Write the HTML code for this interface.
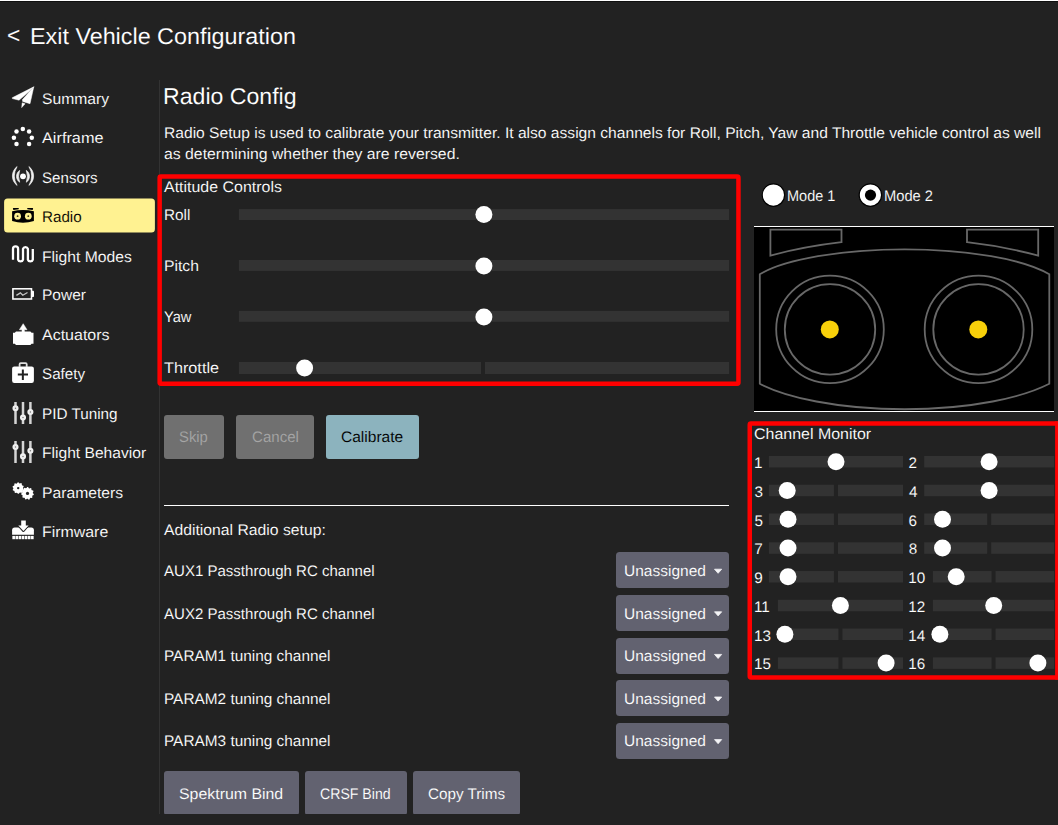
<!DOCTYPE html>
<html lang="en"><head><meta charset="utf-8"><title>Radio Config</title>
<style>
html,body{margin:0;padding:0;}
body{width:1058px;height:825px;overflow:hidden;background:#222222;position:relative;
 font-family:"Liberation Sans",sans-serif;}
#root{position:absolute;left:0;top:0;width:1058px;height:825px;overflow:hidden;background:#222222;}
.t{position:absolute;white-space:nowrap;text-rendering:geometricPrecision;line-height:20px;height:20px;transform-origin:0 0;display:block;}
.b{position:absolute;}
.bar{position:absolute;background:#333333;}
.dot{position:absolute;background:#fff;border-radius:50%;}
.btn{position:absolute;background:#626270;border-radius:3px;}
svg{position:absolute;left:0;top:0;overflow:visible;}
</style></head>
<body><div id="root">
<div class="b" style="left:0.00px;top:0.00px;width:1058.00px;height:1.00px;background:#ffffff;"></div>
<div class="b" style="left:0.00px;top:1.00px;width:1058.00px;height:1.00px;background:#101010;"></div>
<div class="b" style="left:159.00px;top:80.00px;width:1.00px;height:734.00px;background:#333333;"></div>
<div class="b" style="left:164.00px;top:415.00px;width:60.00px;height:44.00px;background:#707070;border-radius:3px;"></div>
<div class="b" style="left:236.00px;top:415.00px;width:78.00px;height:44.00px;background:#707070;border-radius:3px;"></div>
<div class="b" style="left:326.00px;top:415.00px;width:93.00px;height:44.00px;background:#8cb3be;border-radius:3px;"></div>
<div class="b" style="left:164.00px;top:505.00px;width:565.00px;height:1.00px;background:#ffffff;"></div>
<div class="b" style="left:616.00px;top:552.00px;width:113.00px;height:36.00px;background:#626270;border-radius:3.5px;"></div>
<div class="b" style="left:616.00px;top:595.00px;width:113.00px;height:36.00px;background:#626270;border-radius:3.5px;"></div>
<div class="b" style="left:616.00px;top:638.00px;width:113.00px;height:36.00px;background:#626270;border-radius:3.5px;"></div>
<div class="b" style="left:616.00px;top:680.00px;width:113.00px;height:36.00px;background:#626270;border-radius:3.5px;"></div>
<div class="b" style="left:616.00px;top:723.00px;width:113.00px;height:36.00px;background:#626270;border-radius:3.5px;"></div>
<div class="b" style="left:0;top:0;width:1058px;height:814px;overflow:hidden">
<div class="b" style="left:164.00px;top:771.00px;width:135.00px;height:44.00px;background:#626270;border-radius:3px;"></div>
<div class="b" style="left:305.00px;top:771.00px;width:101.50px;height:44.00px;background:#626270;border-radius:3px;"></div>
<div class="b" style="left:412.50px;top:771.00px;width:107.50px;height:44.00px;background:#626270;border-radius:3px;"></div>
</div>
<svg width="1058" height="825" viewBox="0 0 1058 825">
<rect x="4.1" y="198.4" width="150.8" height="34.0" rx="3.5" fill="#fff291"/>
<rect x="238.90" y="209.10" width="490.20" height="10.90" fill="#333333"/>
<rect x="238.90" y="260.00" width="490.20" height="10.90" fill="#333333"/>
<rect x="238.90" y="310.90" width="490.20" height="10.90" fill="#333333"/>
<rect x="238.90" y="362.00" width="242.10" height="12.00" fill="#333333"/>
<rect x="485.00" y="362.00" width="244.10" height="12.00" fill="#333333"/>
<rect x="768.90" y="455.95" width="134.10" height="11.50" fill="#333333"/>
<rect x="924.20" y="455.95" width="130.00" height="11.50" fill="#333333"/>
<rect x="768.90" y="484.72" width="65.05" height="11.50" fill="#333333"/>
<rect x="837.95" y="484.72" width="65.05" height="11.50" fill="#333333"/>
<rect x="924.20" y="484.72" width="130.00" height="11.50" fill="#333333"/>
<rect x="768.90" y="513.49" width="65.05" height="11.50" fill="#333333"/>
<rect x="837.95" y="513.49" width="65.05" height="11.50" fill="#333333"/>
<rect x="924.20" y="513.49" width="63.00" height="11.50" fill="#333333"/>
<rect x="991.20" y="513.49" width="63.00" height="11.50" fill="#333333"/>
<rect x="768.90" y="542.26" width="65.05" height="11.50" fill="#333333"/>
<rect x="837.95" y="542.26" width="65.05" height="11.50" fill="#333333"/>
<rect x="924.20" y="542.26" width="63.00" height="11.50" fill="#333333"/>
<rect x="991.20" y="542.26" width="63.00" height="11.50" fill="#333333"/>
<rect x="768.90" y="571.03" width="65.05" height="11.50" fill="#333333"/>
<rect x="837.95" y="571.03" width="65.05" height="11.50" fill="#333333"/>
<rect x="932.90" y="571.03" width="58.65" height="11.50" fill="#333333"/>
<rect x="995.55" y="571.03" width="58.65" height="11.50" fill="#333333"/>
<rect x="777.90" y="599.80" width="125.10" height="11.50" fill="#333333"/>
<rect x="932.90" y="599.80" width="121.30" height="11.50" fill="#333333"/>
<rect x="777.90" y="628.57" width="60.55" height="11.50" fill="#333333"/>
<rect x="842.45" y="628.57" width="60.55" height="11.50" fill="#333333"/>
<rect x="932.90" y="628.57" width="58.65" height="11.50" fill="#333333"/>
<rect x="995.55" y="628.57" width="58.65" height="11.50" fill="#333333"/>
<rect x="777.90" y="657.34" width="60.55" height="11.50" fill="#333333"/>
<rect x="842.45" y="657.34" width="60.55" height="11.50" fill="#333333"/>
<rect x="932.90" y="657.34" width="58.65" height="11.50" fill="#333333"/>
<rect x="995.55" y="657.34" width="58.65" height="11.50" fill="#333333"/>
<circle cx="483.90" cy="214.50" r="8.50" fill="#fff"/>
<circle cx="483.90" cy="265.90" r="8.50" fill="#fff"/>
<circle cx="483.90" cy="317.00" r="8.50" fill="#fff"/>
<circle cx="304.60" cy="367.90" r="8.50" fill="#fff"/>
<circle cx="836.00" cy="461.70" r="8.50" fill="#fff"/>
<circle cx="989.10" cy="461.70" r="8.50" fill="#fff"/>
<circle cx="787.20" cy="490.47" r="8.50" fill="#fff"/>
<circle cx="989.10" cy="490.47" r="8.50" fill="#fff"/>
<circle cx="788.00" cy="519.24" r="8.50" fill="#fff"/>
<circle cx="942.50" cy="519.24" r="8.50" fill="#fff"/>
<circle cx="788.00" cy="548.01" r="8.50" fill="#fff"/>
<circle cx="942.50" cy="548.01" r="8.50" fill="#fff"/>
<circle cx="788.00" cy="576.78" r="8.50" fill="#fff"/>
<circle cx="956.20" cy="576.78" r="8.50" fill="#fff"/>
<circle cx="840.40" cy="605.55" r="8.50" fill="#fff"/>
<circle cx="993.70" cy="605.55" r="8.50" fill="#fff"/>
<circle cx="784.90" cy="634.32" r="8.50" fill="#fff"/>
<circle cx="939.90" cy="634.32" r="8.50" fill="#fff"/>
<circle cx="886.10" cy="663.09" r="8.50" fill="#fff"/>
<circle cx="1037.90" cy="663.09" r="8.50" fill="#fff"/>
<rect x="159.65" y="176.55" width="578.80" height="207.10" rx="1.2" fill="none" stroke="#ff0000" stroke-width="4.5"/>
<rect x="749.75" y="423.55" width="323.00" height="253.90" rx="1.2" fill="none" stroke="#ff0000" stroke-width="4.5"/>
<rect x="1055.1" y="421.3" width="4" height="258.4" fill="#ff0000"/>
<path d="M714.5 569.20 L721.7 569.20 L718.1 573.30 Z" fill="#f4f4f6" stroke="#f4f4f6" stroke-width="0.8" stroke-linejoin="round"/>
<path d="M714.5 611.80 L721.7 611.80 L718.1 615.90 Z" fill="#f4f4f6" stroke="#f4f4f6" stroke-width="0.8" stroke-linejoin="round"/>
<path d="M714.5 654.40 L721.7 654.40 L718.1 658.50 Z" fill="#f4f4f6" stroke="#f4f4f6" stroke-width="0.8" stroke-linejoin="round"/>
<path d="M714.5 697.00 L721.7 697.00 L718.1 701.10 Z" fill="#f4f4f6" stroke="#f4f4f6" stroke-width="0.8" stroke-linejoin="round"/>
<path d="M714.5 739.60 L721.7 739.60 L718.1 743.70 Z" fill="#f4f4f6" stroke="#f4f4f6" stroke-width="0.8" stroke-linejoin="round"/>
<circle cx="773.4" cy="195.1" r="11.2" fill="#fff" stroke="#000" stroke-width="1.2"/>
<circle cx="870.4" cy="195.1" r="11.2" fill="#fff" stroke="#000" stroke-width="1.2"/>
<circle cx="870.5" cy="195.1" r="5.6" fill="#000"/>
<rect x="754" y="226" width="300" height="186" fill="#000"/>
<rect x="754" y="226" width="300" height="1" fill="#fff"/>
<rect x="754" y="411" width="300" height="1" fill="#fff"/>
<path d="M770.4 229.7 L841.5 229.7 L841.5 242.2 Q804 246.5 770.4 255.6 Z" stroke="#686868" stroke-width="1.8" fill="none"/>
<path d="M1038.2 229.7 L967.0 229.7 L967.0 242.2 Q1004.5 246.5 1038.2 255.6 Z" stroke="#686868" stroke-width="1.8" fill="none"/>
<path d="M759.8 274.3 A158 41.5 0 0 1 1049.3 274.3 L1049.3 383.8 A170 53.5 0 0 1 759.8 383.8 Z" stroke="#686868" stroke-width="1.8" fill="none"/>
<circle cx="830.0" cy="329.4" r="53.8" stroke="#686868" stroke-width="1.8" fill="none"/>
<circle cx="830.0" cy="329.4" r="45.2" stroke="#686868" stroke-width="1.8" fill="none"/>
<circle cx="829.8" cy="329.4" r="9.0" fill="#f8d00a"/>
<circle cx="978.5" cy="329.4" r="53.8" stroke="#686868" stroke-width="1.8" fill="none"/>
<circle cx="978.5" cy="329.4" r="45.2" stroke="#686868" stroke-width="1.8" fill="none"/>
<circle cx="978.3" cy="329.4" r="9.0" fill="#f8d00a"/>
<path d="M33.8 86.8 L12.2 97.8 L12.4 98.6 L19.0 100.2 L29.3 91.3 Z" fill="#fff" stroke="#fff" stroke-width="0.5" stroke-linejoin="round"/>
<path d="M33.8 86.8 L22.5 99.6 L22.6 101.4 L30.0 103.7 Z" fill="#fff" stroke="#fff" stroke-width="0.5" stroke-linejoin="round"/>
<path d="M22.2 102.8 L25.1 103.8 L21.7 107.6 Z" fill="#fff" stroke="#fff" stroke-width="0.5" stroke-linejoin="round"/>
<circle cx="22.8" cy="129.0" r="2.25" fill="#fff"/>
<circle cx="16.5" cy="131.6" r="2.25" fill="#fff"/>
<circle cx="29.1" cy="131.6" r="2.25" fill="#fff"/>
<circle cx="13.9" cy="137.7" r="2.25" fill="#fff"/>
<circle cx="31.8" cy="137.7" r="2.25" fill="#fff"/>
<circle cx="16.5" cy="144.0" r="2.25" fill="#fff"/>
<circle cx="29.1" cy="144.0" r="2.25" fill="#fff"/>
<circle cx="23.0" cy="176.3" r="2.9" fill="#fff"/>
<path d="M19.7 170.4 A7.04 7.04 0 0 0 19.7 182.2 A16.37 16.37 0 0 1 19.7 170.4 Z" fill="#f0f0f0" stroke="#f0f0f0" stroke-width="0.7" stroke-linejoin="round"/>
<path d="M26.3 170.4 A7.04 7.04 0 0 1 26.3 182.2 A16.37 16.37 0 0 0 26.3 170.4 Z" fill="#f0f0f0" stroke="#f0f0f0" stroke-width="0.7" stroke-linejoin="round"/>
<path d="M17.1 166.6 A11.75 11.75 0 0 0 17.1 185.4 A18.29 18.29 0 0 1 17.1 166.6 Z" fill="#f0f0f0" stroke="#f0f0f0" stroke-width="0.7" stroke-linejoin="round"/>
<path d="M28.9 166.6 A11.75 11.75 0 0 1 28.9 185.4 A18.29 18.29 0 0 0 28.9 166.6 Z" fill="#f0f0f0" stroke="#f0f0f0" stroke-width="0.7" stroke-linejoin="round"/>
<path d="M12.1 211.2 Q23 208.9 33.9 211.2 L33.9 221.0 Q23 224.4 12.1 221.0 Z" fill="#000"/>
<path d="M12.9 208.0 L18.8 208.0 L18.6 209.3 L13.3 209.9 Z" fill="#000"/>
<path d="M33.1 208.0 L27.2 208.0 L27.4 209.3 L32.7 209.9 Z" fill="#000"/>
<circle cx="17.6" cy="216.2" r="3.35" fill="#fff291"/>
<circle cx="17.6" cy="216.2" r="0.9" fill="#3a3620"/>
<circle cx="28.3" cy="216.2" r="3.35" fill="#fff291"/>
<circle cx="28.3" cy="216.2" r="0.9" fill="#3a3620"/>
<path d="M13.0 259.8 L13.0 248.9 A2.5500000000000007 2.5500000000000007 0 0 1 18.1 248.9 L18.1 259.6 A2.5500000000000007 2.5500000000000007 0 0 0 23.0 259.6 L23.0 248.9 A2.5500000000000007 2.5500000000000007 0 0 1 27.9 248.9 L27.9 259.6 A2.5500000000000007 2.5500000000000007 0 0 0 32.8 259.6 L32.8 249.1" fill="none" stroke="#fff" stroke-width="2.3"/>
<rect x="12.9" y="288.8" width="18.6" height="10.2" fill="none" stroke="#fff" stroke-width="1.55"/>
<path d="M31.4 290.8 L33.2 290.8 Q34.0 290.8 34.0 291.6 L34.0 296.2 Q34.0 297.0 33.2 297.0 L31.4 297.0 Z" fill="#fff"/>
<path d="M16.4 295.4 L20.4 292.9 L22.8 295.2 L27.5 292.5" fill="none" stroke="#c4c4c4" stroke-width="1.3" stroke-linejoin="miter"/>
<path d="M16.0 331.6 L30.4 331.6 L31.6 332.8 L33.5 332.8 L33.5 343.7 L31.6 343.7 L30.4 345.0 L16.0 345.0 L14.8 343.7 L13.0 343.7 L13.0 332.8 L14.8 332.8 Z" fill="#fff"/>
<path d="M23.2 323.7 L27.0 329.7 L24.4 329.7 L24.4 332 L22.0 332 L22.0 329.7 L19.4 329.7 Z" fill="#fff" stroke="#fff" stroke-width="0.5" stroke-linejoin="round"/>
<rect x="12.1" y="366.6" width="21.8" height="16.3" rx="2.2" fill="#fff"/>
<path d="M19.6 367 L19.6 364.2 Q19.6 363.1 20.7 363.1 L25.6 363.1 Q26.7 363.1 26.7 364.2 L26.7 367" fill="none" stroke="#e0e0e0" stroke-width="1.8"/>
<path d="M17.8 374.6 L28.0 374.6 M22.85 369.4 L22.85 380.1" stroke="#222" stroke-width="2.0" stroke-linecap="butt" fill="none"/>
<rect x="14.25" y="402.0" width="2.5" height="22.0" fill="#d4d4d4"/>
<rect x="21.75" y="402.0" width="2.5" height="22.0" fill="#d4d4d4"/>
<rect x="29.15" y="402.0" width="2.5" height="22.0" fill="#d4d4d4"/>
<circle cx="15.5" cy="408.3" r="1.9" fill="#777" stroke="#f0f0f0" stroke-width="2.3"/>
<circle cx="23.0" cy="417.6" r="1.9" fill="#777" stroke="#f0f0f0" stroke-width="2.3"/>
<circle cx="30.4" cy="412.0" r="1.9" fill="#777" stroke="#f0f0f0" stroke-width="2.3"/>
<rect x="14.25" y="441.0" width="2.5" height="22.0" fill="#d4d4d4"/>
<rect x="21.75" y="441.0" width="2.5" height="22.0" fill="#d4d4d4"/>
<rect x="29.15" y="441.0" width="2.5" height="22.0" fill="#d4d4d4"/>
<circle cx="15.5" cy="447.0" r="1.9" fill="#777" stroke="#f0f0f0" stroke-width="2.3"/>
<circle cx="23.0" cy="456.4" r="1.9" fill="#777" stroke="#f0f0f0" stroke-width="2.3"/>
<circle cx="30.4" cy="450.7" r="1.9" fill="#777" stroke="#f0f0f0" stroke-width="2.3"/>
<path d="M23.84 489.24 L23.59 490.11 L22.47 490.51 L22.04 491.15 L22.09 492.34 L21.38 492.89 L20.24 492.56 L19.51 492.82 L18.85 493.81 L17.95 493.84 L17.23 492.90 L16.49 492.69 L15.37 493.11 L14.62 492.60 L14.59 491.41 L14.12 490.81 L12.97 490.49 L12.66 489.64 L13.33 488.66 L13.30 487.89 L12.56 486.96 L12.81 486.09 L13.93 485.69 L14.36 485.05 L14.31 483.86 L15.02 483.31 L16.16 483.64 L16.89 483.38 L17.55 482.39 L18.45 482.36 L19.17 483.30 L19.91 483.51 L21.03 483.09 L21.78 483.60 L21.81 484.79 L22.28 485.39 L23.43 485.71 L23.74 486.56 L23.07 487.54 L23.10 488.31 Z" fill="#fff"/>
<circle cx="18.2" cy="488.1" r="1.2" fill="#222222"/>
<path d="M33.82 494.03 L33.66 494.93 L32.50 495.43 L32.16 496.12 L32.47 497.35 L31.86 498.02 L30.61 497.81 L29.95 498.21 L29.55 499.41 L28.67 499.64 L27.73 498.80 L26.96 498.77 L25.97 499.56 L25.11 499.28 L24.78 498.06 L24.14 497.63 L22.88 497.76 L22.31 497.06 L22.69 495.85 L22.39 495.14 L21.26 494.57 L21.16 493.67 L22.13 492.86 L22.26 492.10 L21.62 491.01 L22.02 490.20 L23.27 490.04 L23.79 489.47 L23.84 488.21 L24.62 487.74 L25.76 488.29 L26.50 488.09 L27.23 487.06 L28.13 487.08 L28.80 488.16 L29.53 488.40 L30.70 487.92 L31.45 488.43 L31.43 489.69 L31.91 490.29 L33.16 490.52 L33.51 491.35 L32.81 492.40 L32.90 493.17 Z" fill="#fff"/>
<circle cx="27.5" cy="493.4" r="1.6" fill="#222222"/>
<path d="M12.1 534.7 L12.1 530.2 Q12.1 527.6 14.7 527.6 L31.3 527.6 Q33.9 527.6 33.9 530.2 L33.9 534.7 Z" fill="#fff"/>
<path d="M17.0 525.0 L29.8 525.0 L23.4 532.0 Z" fill="#222222" stroke="#222222" stroke-width="1.0"/>
<path d="M21.2 520.4 L25.8 520.4 L25.8 525.6 L28.6 525.6 L23.45 531.0 L18.3 525.6 L21.2 525.6 Z" fill="#fff"/>
<rect x="12.35" y="535.9" width="2.61" height="3.3" fill="#fff"/>
<rect x="15.46" y="535.9" width="2.61" height="3.3" fill="#fff"/>
<rect x="18.58" y="535.9" width="2.61" height="3.3" fill="#fff"/>
<rect x="21.69" y="535.9" width="2.61" height="3.3" fill="#fff"/>
<rect x="24.81" y="535.9" width="2.61" height="3.3" fill="#fff"/>
<rect x="27.92" y="535.9" width="2.61" height="3.3" fill="#fff"/>
<rect x="31.04" y="535.9" width="2.61" height="3.3" fill="#fff"/>
</svg>
<span class="t" style="left:7.43px;top:25px;font-size:22.82px;color:#fff;-webkit-text-stroke:0.1px #222222;transform:scaleX(0.9991)">&lt;</span>
<span class="t" style="left:29.58px;top:26px;font-size:22.82px;color:#fff;-webkit-text-stroke:0.1px #222222;transform:scaleX(1.0230)">Exit Vehicle Configuration</span>
<span class="t" style="left:41.91px;top:90px;font-size:15.26px;color:#fff;-webkit-text-stroke:0.1px #222222;transform:scaleX(1.0275)">Summary</span>
<span class="t" style="left:41.90px;top:129px;font-size:15.26px;color:#fff;-webkit-text-stroke:0.1px #222222;transform:scaleX(1.0676)">Airframe</span>
<span class="t" style="left:41.93px;top:169px;font-size:15.26px;color:#fff;-webkit-text-stroke:0.1px #222222;transform:scaleX(0.9921)">Sensors</span>
<span class="t" style="left:41.91px;top:208px;font-size:15.26px;color:#000;-webkit-text-stroke:0.1px #fff291;transform:scaleX(0.9957)">Radio</span>
<span class="t" style="left:41.87px;top:248px;font-size:15.26px;color:#fff;-webkit-text-stroke:0.1px #222222;transform:scaleX(1.0292)">Flight Modes</span>
<span class="t" style="left:41.89px;top:286px;font-size:15.26px;color:#fff;-webkit-text-stroke:0.1px #222222;transform:scaleX(1.0169)">Power</span>
<span class="t" style="left:41.90px;top:326px;font-size:15.26px;color:#fff;-webkit-text-stroke:0.1px #222222;transform:scaleX(1.0486)">Actuators</span>
<span class="t" style="left:41.93px;top:365px;font-size:15.26px;color:#fff;-webkit-text-stroke:0.1px #222222;transform:scaleX(0.9956)">Safety</span>
<span class="t" style="left:41.90px;top:405px;font-size:15.26px;color:#fff;-webkit-text-stroke:0.1px #222222;transform:scaleX(1.0023)">PID Tuning</span>
<span class="t" style="left:41.88px;top:444px;font-size:15.26px;color:#fff;-webkit-text-stroke:0.1px #222222;transform:scaleX(1.0236)">Flight Behavior</span>
<span class="t" style="left:41.87px;top:484px;font-size:15.26px;color:#fff;-webkit-text-stroke:0.1px #222222;transform:scaleX(1.0284)">Parameters</span>
<span class="t" style="left:41.86px;top:523px;font-size:15.26px;color:#fff;-webkit-text-stroke:0.1px #222222;transform:scaleX(1.0425)">Firmware</span>
<span class="t" style="left:163.49px;top:86px;font-size:22.82px;color:#fff;-webkit-text-stroke:0.1px #222222;transform:scaleX(1.0127)">Radio Config</span>
<span class="t" style="left:163.68px;top:124px;font-size:15.26px;color:#fff;-webkit-text-stroke:0.1px #222222;transform:scaleX(1.0233)">Radio Setup is used to calibrate your transmitter. It also assign channels for Roll, Pitch, Yaw and Throttle vehicle control as well</span>
<span class="t" style="left:164.21px;top:145px;font-size:15.26px;color:#fff;-webkit-text-stroke:0.1px #222222;transform:scaleX(1.0355)">as determining whether they are reversed.</span>
<span class="t" style="left:164.30px;top:178px;font-size:15.26px;color:#fff;-webkit-text-stroke:0.1px #222222;transform:scaleX(1.0459)">Attitude Controls</span>
<span class="t" style="left:163.70px;top:206px;font-size:15.26px;color:#fff;-webkit-text-stroke:0.1px #222222;transform:scaleX(1.0045)">Roll</span>
<span class="t" style="left:163.67px;top:257px;font-size:15.26px;color:#fff;-webkit-text-stroke:0.1px #222222;transform:scaleX(1.0320)">Pitch</span>
<span class="t" style="left:163.97px;top:308px;font-size:15.26px;color:#fff;-webkit-text-stroke:0.1px #222222;transform:scaleX(0.9595)">Yaw</span>
<span class="t" style="left:164.15px;top:359px;font-size:15.26px;color:#fff;-webkit-text-stroke:0.1px #222222;transform:scaleX(1.0642)">Throttle</span>
<span class="t" style="left:179.04px;top:428px;font-size:15.26px;color:#a6a6a6;-webkit-text-stroke:0.1px #707070;transform:scaleX(0.9723)">Skip</span>
<span class="t" style="left:251.69px;top:428px;font-size:15.26px;color:#a6a6a6;-webkit-text-stroke:0.1px #707070;transform:scaleX(0.9894)">Cancel</span>
<span class="t" style="left:341.37px;top:428px;font-size:15.26px;color:#000;-webkit-text-stroke:0.1px #8cb3be;transform:scaleX(1.0194)">Calibrate</span>
<span class="t" style="left:164.30px;top:521px;font-size:15.26px;color:#fff;-webkit-text-stroke:0.1px #222222;transform:scaleX(1.0316)">Additional Radio setup:</span>
<span class="t" style="left:164.30px;top:562px;font-size:15.26px;color:#fff;-webkit-text-stroke:0.1px #222222;transform:scaleX(0.9858)">AUX1 Passthrough RC channel</span>
<span class="t" style="left:164.30px;top:605px;font-size:15.26px;color:#fff;-webkit-text-stroke:0.1px #222222;transform:scaleX(0.9858)">AUX2 Passthrough RC channel</span>
<span class="t" style="left:163.70px;top:647px;font-size:15.26px;color:#fff;-webkit-text-stroke:0.1px #222222;transform:scaleX(1.0089)">PARAM1 tuning channel</span>
<span class="t" style="left:163.70px;top:690px;font-size:15.26px;color:#fff;-webkit-text-stroke:0.1px #222222;transform:scaleX(1.0089)">PARAM2 tuning channel</span>
<span class="t" style="left:163.70px;top:732px;font-size:15.26px;color:#fff;-webkit-text-stroke:0.1px #222222;transform:scaleX(1.0089)">PARAM3 tuning channel</span>
<span class="t" style="left:623.73px;top:562px;font-size:15.26px;color:#fff;-webkit-text-stroke:0.1px #626270;transform:scaleX(1.0166)">Unassigned</span>
<span class="t" style="left:623.73px;top:605px;font-size:15.26px;color:#fff;-webkit-text-stroke:0.1px #626270;transform:scaleX(1.0166)">Unassigned</span>
<span class="t" style="left:623.73px;top:647px;font-size:15.26px;color:#fff;-webkit-text-stroke:0.1px #626270;transform:scaleX(1.0166)">Unassigned</span>
<span class="t" style="left:623.73px;top:690px;font-size:15.26px;color:#fff;-webkit-text-stroke:0.1px #626270;transform:scaleX(1.0166)">Unassigned</span>
<span class="t" style="left:623.73px;top:732px;font-size:15.26px;color:#fff;-webkit-text-stroke:0.1px #626270;transform:scaleX(1.0166)">Unassigned</span>
<span class="t" style="left:179.00px;top:785px;font-size:15.26px;color:#fff;-webkit-text-stroke:0.1px #626270;transform:scaleX(1.0419)">Spektrum Bind</span>
<span class="t" style="left:320.14px;top:785px;font-size:15.26px;color:#fff;-webkit-text-stroke:0.1px #626270;transform:scaleX(0.9257)">CRSF Bind</span>
<span class="t" style="left:427.69px;top:785px;font-size:15.26px;color:#fff;-webkit-text-stroke:0.1px #626270;transform:scaleX(0.9994)">Copy Trims</span>
<span class="t" style="left:786.97px;top:187px;font-size:15.26px;color:#fff;-webkit-text-stroke:0.1px #222222;transform:scaleX(0.9512)">Mode 1</span>
<span class="t" style="left:883.75px;top:187px;font-size:15.26px;color:#fff;-webkit-text-stroke:0.1px #222222;transform:scaleX(0.9635)">Mode 2</span>
<span class="t" style="left:754.25px;top:425px;font-size:15.26px;color:#fff;-webkit-text-stroke:0.1px #222222;transform:scaleX(1.0468)">Channel Monitor</span>
<span class="t" style="left:753.95px;top:454px;font-size:15.26px;color:#fff;-webkit-text-stroke:0.1px #222222;transform:scaleX(1.0000)">1</span>
<span class="t" style="left:908.48px;top:454px;font-size:15.26px;color:#fff;-webkit-text-stroke:0.1px #222222;transform:scaleX(1.0000)">2</span>
<span class="t" style="left:754.42px;top:483px;font-size:15.26px;color:#fff;-webkit-text-stroke:0.1px #222222;transform:scaleX(1.0000)">3</span>
<span class="t" style="left:908.96px;top:483px;font-size:15.26px;color:#fff;-webkit-text-stroke:0.1px #222222;transform:scaleX(1.0000)">4</span>
<span class="t" style="left:754.42px;top:512px;font-size:15.26px;color:#fff;-webkit-text-stroke:0.1px #222222;transform:scaleX(1.0000)">5</span>
<span class="t" style="left:908.48px;top:512px;font-size:15.26px;color:#fff;-webkit-text-stroke:0.1px #222222;transform:scaleX(1.0000)">6</span>
<span class="t" style="left:754.18px;top:540px;font-size:15.26px;color:#fff;-webkit-text-stroke:0.1px #222222;transform:scaleX(1.0000)">7</span>
<span class="t" style="left:908.72px;top:540px;font-size:15.26px;color:#fff;-webkit-text-stroke:0.1px #222222;transform:scaleX(1.0000)">8</span>
<span class="t" style="left:754.18px;top:569px;font-size:15.26px;color:#fff;-webkit-text-stroke:0.1px #222222;transform:scaleX(1.0000)">9</span>
<span class="t" style="left:908.25px;top:569px;font-size:15.26px;color:#fff;-webkit-text-stroke:0.1px #222222;transform:scaleX(1.0000)">10</span>
<span class="t" style="left:753.95px;top:598px;font-size:15.26px;color:#fff;-webkit-text-stroke:0.1px #222222;transform:scaleX(1.0000)">11</span>
<span class="t" style="left:908.25px;top:598px;font-size:15.26px;color:#fff;-webkit-text-stroke:0.1px #222222;transform:scaleX(1.0000)">12</span>
<span class="t" style="left:753.95px;top:627px;font-size:15.26px;color:#fff;-webkit-text-stroke:0.1px #222222;transform:scaleX(1.0000)">13</span>
<span class="t" style="left:908.25px;top:627px;font-size:15.26px;color:#fff;-webkit-text-stroke:0.1px #222222;transform:scaleX(1.0000)">14</span>
<span class="t" style="left:753.95px;top:655px;font-size:15.26px;color:#fff;-webkit-text-stroke:0.1px #222222;transform:scaleX(1.0000)">15</span>
<span class="t" style="left:908.25px;top:655px;font-size:15.26px;color:#fff;-webkit-text-stroke:0.1px #222222;transform:scaleX(1.0000)">16</span>
</div></body></html>
